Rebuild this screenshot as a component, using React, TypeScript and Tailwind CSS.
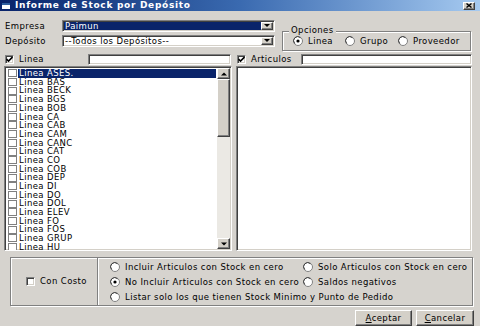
import React from "react";

const sunken =
  "border border-t-[#808080] border-l-[#808080] border-b-white border-r-white shadow-[inset_1px_1px_0_#404040,inset_-1px_-1px_0_#d4d0c8]";
const raised =
  "border border-t-white border-l-white border-b-[#404040] border-r-[#404040] shadow-[inset_-1px_-1px_0_#808080]";

function Check({ checked = false }: { checked?: boolean }) {
  return (
    <div className={`w-[9px] h-[9px] bg-white ${sunken} flex items-center justify-center shrink-0`}>
      {checked && (
        <svg width="7" height="7" viewBox="0 0 7 7">
          <path d="M0.5 3 L2.5 5 L6.5 1" stroke="#000" strokeWidth="1.6" fill="none" />
        </svg>
      )}
    </div>
  );
}

function Radio({ checked = false }: { checked?: boolean }) {
  return (
    <svg width="10" height="10" viewBox="0 0 10 10" className="shrink-0">
      <circle cx="5" cy="5" r="4.5" fill="#fff" stroke="#808080" strokeWidth="1" />
      <path d="M1.8 7.5 A4 4 0 0 1 7.5 1.8" stroke="#404040" strokeWidth="1" fill="none" />
      {checked && <circle cx="5" cy="5" r="1.6" fill="#000" />}
    </svg>
  );
}

function DropBtn() {
  return (
    <div className={`w-[12px] h-full bg-[#d4d0c8] ${raised} flex items-center justify-center shrink-0`}>
      <svg width="6" height="4" viewBox="0 0 6 4">
        <path d="M0 0 L6 0 L3 3 Z" fill="#000" />
      </svg>
    </div>
  );
}

const items = [
  "ASES.", "BAS", "BECK", "BGS", "BOB", "CA", "CAB", "CAM", "CANC", "CAT", "CO",
  "COB", "DEP", "DI", "DO", "DOL", "ELEV", "FO", "FOS", "GRUP", "HU",
];

export default function App() {
  return (
    <div className="w-[480px] h-[326px] bg-[#d6d3ce] flex flex-col overflow-hidden font-['DejaVu_Sans',sans-serif] text-[8.5px] tracking-[0.4px] text-black leading-none">
      {/* Title bar */}
      <div className="h-[11px] shrink-0 flex items-center bg-gradient-to-r from-[#0a246a] via-[#3a6ab0] to-[#a6caf0] pl-[2px] pr-[5px]">
        <div className="w-[8px] h-[6px] bg-white border-t-2 border-[#3060a0] shrink-0" />
        <span className="ml-[5px] text-white font-bold text-[9px] tracking-[0.7px]">Informe de Stock por Depósito</span>
        <div className={`ml-auto w-[12px] h-[8px] bg-[#d4d0c8] ${raised} flex items-center justify-center`}>
          <svg width="6" height="5" viewBox="0 0 6 5">
            <path d="M0.5 0.5 L5.5 4.5 M5.5 0.5 L0.5 4.5" stroke="#000" strokeWidth="1.4" />
          </svg>
        </div>
      </div>

      {/* Top section */}
      <div className="h-[41px] shrink-0 flex">
        <div className="pl-[5px] pt-[9px] flex flex-col gap-[3px]">
          <div className="flex items-center h-[12px]">
            <span className="w-[57px]">Empresa</span>
            <div className={`w-[213px] h-[12px] bg-white ${sunken} flex p-[1px]`}>
              <div className="flex-1 bg-[#0a246a] text-white flex items-center pl-[1px]">Paimun</div>
              <DropBtn />
            </div>
          </div>
          <div className="flex items-center h-[12px]">
            <span className="w-[57px]">Depósito</span>
            <div className={`w-[213px] h-[12px] bg-white ${sunken} flex p-[1px]`}>
              <div className="flex-1 flex items-center pl-[1px]">--Todos los Depósitos--</div>
              <DropBtn />
            </div>
          </div>
        </div>
        <div className="ml-[7px] mt-[20px] w-[189px] h-[20px] relative border border-[#808080] shadow-[1px_1px_0_#fff,inset_1px_1px_0_#fff] flex items-center pl-[10px]">
          <span className="absolute -top-[6px] left-[6px] bg-[#d6d3ce] px-[2px]">Opciones</span>
          <div className="flex items-center gap-[5px] w-[52px]"><Radio checked />Linea</div>
          <div className="flex items-center gap-[5px] w-[53px]"><Radio />Grupo</div>
          <div className="flex items-center gap-[5px]"><Radio />Proveedor</div>
        </div>
      </div>

      {/* Filters row */}
      <div className="h-[14px] shrink-0 flex items-center">
        <div className="ml-[5px] flex items-center gap-[5px] w-[83px]"><Check checked />Linea</div>
        <div className={`w-[143px] h-[11px] bg-white ${sunken}`} />
        <div className="ml-[6px] flex items-center gap-[5px] w-[64px]"><Check checked />Articulos</div>
        <div className={`w-[171px] h-[11px] bg-white ${sunken}`} />
      </div>

      {/* Lists */}
      <div className="h-[185px] shrink-0 flex">
        <div className={`ml-[4px] w-[228px] h-full bg-white ${sunken} flex p-[1px] overflow-hidden`}>
          <div className="flex-1 flex flex-col pt-[1px]">
            {items.map((it, i) => (
              <div key={it} className="h-[8.7px] flex items-center shrink-0">
                <div className="ml-[2px] w-[9px] h-[8px] border border-[#808080] bg-white shrink-0" />
                <div className={`ml-[1px] flex-1 h-full flex items-center pl-[1px] ${i === 0 ? "bg-[#0a246a] text-white" : ""}`}>
                  Linea {it}
                </div>
              </div>
            ))}
          </div>
          <div className="w-[13px] h-full flex flex-col bg-[#ebe9e4] ml-[1px]">
            <div className={`h-[11px] bg-[#d4d0c8] ${raised} flex items-center justify-center shrink-0`}>
              <svg width="6" height="4" viewBox="0 0 6 4"><path d="M0 3.5 L6 3.5 L3 0.5 Z" fill="#000" /></svg>
            </div>
            <div className={`h-[58px] bg-[#d4d0c8] ${raised} shrink-0`} />
            <div className="flex-1" />
            <div className={`h-[11px] bg-[#d4d0c8] ${raised} flex items-center justify-center shrink-0`}>
              <svg width="6" height="4" viewBox="0 0 6 4"><path d="M0 0.5 L6 0.5 L3 3.5 Z" fill="#000" /></svg>
            </div>
          </div>
        </div>
        <div className={`ml-[4px] w-[236px] h-full bg-white ${sunken}`} />
      </div>

      {/* Bottom options */}
      <div className="mt-[6px] ml-[10px] w-[463px] h-[49px] shrink-0 flex border border-[#808080] shadow-[1px_1px_0_#fff,inset_1px_1px_0_#fff]">
        <div className="w-[87px] h-full flex items-center pl-[15px] gap-[5px] border-r border-[#808080] shadow-[1px_0_0_#fff]">
          <Check />Con Costo
        </div>
        <div className="flex-1 flex flex-col pl-[12px] pt-[4px] gap-[5px]">
          <div className="flex items-center h-[10px]">
            <div className="flex items-center gap-[5px] w-[193px]"><Radio />Incluir Articulos con Stock en cero</div>
            <div className="flex items-center gap-[5px]"><Radio />Solo Articulos con Stock en cero</div>
          </div>
          <div className="flex items-center h-[10px]">
            <div className="flex items-center gap-[5px] w-[193px]"><Radio checked />No Incluir Articulos con Stock en cero</div>
            <div className="flex items-center gap-[5px]"><Radio />Saldos negativos</div>
          </div>
          <div className="flex items-center h-[10px]">
            <div className="flex items-center gap-[5px]"><Radio />Listar solo los que tienen Stock Minimo y Punto de Pedido</div>
          </div>
        </div>
      </div>

      {/* Buttons */}
      <div className="mt-[4px] flex justify-end pr-[6px] gap-[4px]">
        <div className={`w-[57px] h-[16px] bg-[#d4d0c8] ${raised} flex items-center justify-center`}>
          <span><span className="underline">A</span>ceptar</span>
        </div>
        <div className={`w-[58px] h-[16px] bg-[#d4d0c8] ${raised} flex items-center justify-center`}>
          <span><span className="underline">C</span>ancelar</span>
        </div>
      </div>
    </div>
  );
}
